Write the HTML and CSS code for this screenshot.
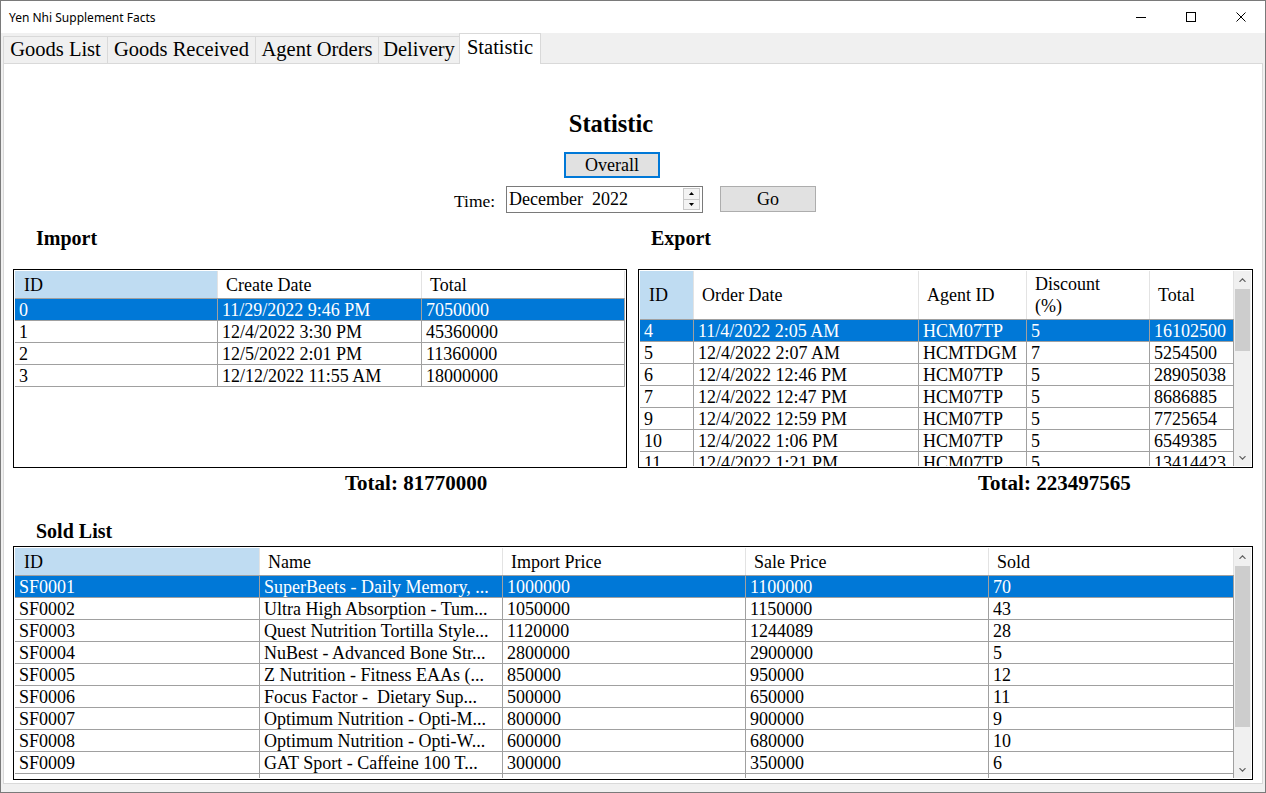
FILE: index.html
```html
<!DOCTYPE html>
<html>
<head>
<meta charset="utf-8">
<title>Yen Nhi Supplement Facts</title>
<link rel="stylesheet" href="styles.css">
</head>
<body>
<div class="window">
  <div class="titlebar">
    <span class="title">Yen Nhi Supplement Facts</span>
    <div class="controls">
      <span class="ctl"><svg width="10" height="10" viewBox="0 0 10 10"><line x1="0" y1="5.5" x2="10" y2="5.5" stroke="#000" stroke-width="1"/></svg></span>
      <span class="ctl"><svg width="10" height="10" viewBox="0 0 10 10"><rect x="0.5" y="0.5" width="9" height="9" fill="none" stroke="#000" stroke-width="1"/></svg></span>
      <span class="ctl"><svg width="10" height="10" viewBox="0 0 10 10"><path d="M0.5 0.5 L9.5 9.5 M9.5 0.5 L0.5 9.5" stroke="#000" stroke-width="1"/></svg></span>
    </div>
  </div>
  <div class="tabs">
    <div class="tab tab-goods">Goods List</div>
    <div class="tab tab-received">Goods Received</div>
    <div class="tab tab-orders">Agent Orders</div>
    <div class="tab tab-delivery">Delivery</div>
    <div class="tab tab-statistic active">Statistic</div>
  </div>
  <div class="panel">
    <div class="top">
      <h1 class="page-title">Statistic</h1>
      <button class="btn overall">Overall</button>
      <div class="time-row">
        <span class="time-label">Time:</span>
        <div class="datepicker">
          <span class="date-text">December&nbsp; 2022</span>
          <div class="spin">
            <span class="spin-btn"><svg width="5" height="3" viewBox="0 0 5 3"><path d="M2.5 0 L5 3 L0 3 Z" fill="#000"/></svg></span>
            <span class="spin-btn"><svg width="5" height="3" viewBox="0 0 5 3"><path d="M0 0 L5 0 L2.5 3 Z" fill="#000"/></svg></span>
          </div>
        </div>
        <button class="btn go">Go</button>
      </div>
    </div>

    <div class="lists">
      <section class="list import">
        <h2 class="section-title">Import</h2>
        <div class="grid grid-import">
          <div class="grid-body">
            <div class="hrow cols-import">
              <div class="hcell current">ID</div>
              <div class="hcell">Create Date</div>
              <div class="hcell">Total</div>
            </div>
            <div class="row cols-import selected"><div class="cell">0</div><div class="cell">11/29/2022 9:46 PM</div><div class="cell">7050000</div></div>
            <div class="row cols-import"><div class="cell">1</div><div class="cell">12/4/2022 3:30 PM</div><div class="cell">45360000</div></div>
            <div class="row cols-import"><div class="cell">2</div><div class="cell">12/5/2022 2:01 PM</div><div class="cell">11360000</div></div>
            <div class="row cols-import"><div class="cell">3</div><div class="cell">12/12/2022 11:55 AM</div><div class="cell">18000000</div></div>
          </div>
        </div>
        <div class="total total-import">Total: 81770000</div>
      </section>

      <section class="list export">
        <h2 class="section-title">Export</h2>
        <div class="grid grid-export">
          <div class="grid-body">
            <div class="hrow hrow-tall cols-export">
              <div class="hcell current">ID</div>
              <div class="hcell">Order Date</div>
              <div class="hcell">Agent ID</div>
              <div class="hcell">Discount<br>(%)</div>
              <div class="hcell">Total</div>
            </div>
            <div class="row cols-export selected"><div class="cell">4</div><div class="cell">11/4/2022 2:05 AM</div><div class="cell">HCM07TP</div><div class="cell">5</div><div class="cell">16102500</div></div>
            <div class="row cols-export"><div class="cell">5</div><div class="cell">12/4/2022 2:07 AM</div><div class="cell">HCMTDGM</div><div class="cell">7</div><div class="cell">5254500</div></div>
            <div class="row cols-export"><div class="cell">6</div><div class="cell">12/4/2022 12:46 PM</div><div class="cell">HCM07TP</div><div class="cell">5</div><div class="cell">28905038</div></div>
            <div class="row cols-export"><div class="cell">7</div><div class="cell">12/4/2022 12:47 PM</div><div class="cell">HCM07TP</div><div class="cell">5</div><div class="cell">8686885</div></div>
            <div class="row cols-export"><div class="cell">9</div><div class="cell">12/4/2022 12:59 PM</div><div class="cell">HCM07TP</div><div class="cell">5</div><div class="cell">7725654</div></div>
            <div class="row cols-export"><div class="cell">10</div><div class="cell">12/4/2022 1:06 PM</div><div class="cell">HCM07TP</div><div class="cell">5</div><div class="cell">6549385</div></div>
            <div class="row cols-export"><div class="cell">11</div><div class="cell">12/4/2022 1:21 PM</div><div class="cell">HCM07TP</div><div class="cell">5</div><div class="cell">13414423</div></div>
          </div>
          <div class="scrollbar">
            <span class="sb-btn"><svg width="7" height="4" viewBox="0 0 7 4"><polyline points="0.5,3.8 3.5,0.8 6.5,3.8" fill="none" stroke="#606060" stroke-width="1.2"/></svg></span>
            <div class="sb-track"><div class="thumb thumb-export"></div></div>
            <span class="sb-btn"><svg width="7" height="4" viewBox="0 0 7 4"><polyline points="0.5,0.2 3.5,3.2 6.5,0.2" fill="none" stroke="#606060" stroke-width="1.2"/></svg></span>
          </div>
        </div>
        <div class="total total-export">Total: 223497565</div>
      </section>
    </div>

    <section class="sold">
      <h2 class="section-title">Sold List</h2>
      <div class="grid grid-sold">
        <div class="grid-body">
          <div class="hrow cols-sold">
            <div class="hcell current">ID</div>
            <div class="hcell">Name</div>
            <div class="hcell">Import Price</div>
            <div class="hcell">Sale Price</div>
            <div class="hcell">Sold</div>
          </div>
          <div class="row cols-sold selected"><div class="cell">SF0001</div><div class="cell">SuperBeets - Daily Memory, ...</div><div class="cell">1000000</div><div class="cell">1100000</div><div class="cell">70</div></div>
          <div class="row cols-sold"><div class="cell">SF0002</div><div class="cell">Ultra High Absorption - Tum...</div><div class="cell">1050000</div><div class="cell">1150000</div><div class="cell">43</div></div>
          <div class="row cols-sold"><div class="cell">SF0003</div><div class="cell">Quest Nutrition Tortilla Style...</div><div class="cell">1120000</div><div class="cell">1244089</div><div class="cell">28</div></div>
          <div class="row cols-sold"><div class="cell">SF0004</div><div class="cell">NuBest - Advanced Bone Str...</div><div class="cell">2800000</div><div class="cell">2900000</div><div class="cell">5</div></div>
          <div class="row cols-sold"><div class="cell">SF0005</div><div class="cell">Z Nutrition - Fitness EAAs (...</div><div class="cell">850000</div><div class="cell">950000</div><div class="cell">12</div></div>
          <div class="row cols-sold"><div class="cell">SF0006</div><div class="cell">Focus Factor -  Dietary Sup...</div><div class="cell">500000</div><div class="cell">650000</div><div class="cell">11</div></div>
          <div class="row cols-sold"><div class="cell">SF0007</div><div class="cell">Optimum Nutrition - Opti-M...</div><div class="cell">800000</div><div class="cell">900000</div><div class="cell">9</div></div>
          <div class="row cols-sold"><div class="cell">SF0008</div><div class="cell">Optimum Nutrition - Opti-W...</div><div class="cell">600000</div><div class="cell">680000</div><div class="cell">10</div></div>
          <div class="row cols-sold"><div class="cell">SF0009</div><div class="cell">GAT Sport - Caffeine 100 T...</div><div class="cell">300000</div><div class="cell">350000</div><div class="cell">6</div></div>
          <div class="row cols-sold"><div class="cell">SF0010</div><div class="cell">Jarrow Formulas - Bone-Up...</div><div class="cell">450000</div><div class="cell">520000</div><div class="cell">8</div></div>
        </div>
        <div class="scrollbar">
          <span class="sb-btn"><svg width="7" height="4" viewBox="0 0 7 4"><polyline points="0.5,3.8 3.5,0.8 6.5,3.8" fill="none" stroke="#606060" stroke-width="1.2"/></svg></span>
          <div class="sb-track"><div class="thumb thumb-sold"></div></div>
          <span class="sb-btn"><svg width="7" height="4" viewBox="0 0 7 4"><polyline points="0.5,0.2 3.5,3.2 6.5,0.2" fill="none" stroke="#606060" stroke-width="1.2"/></svg></span>
        </div>
      </div>
    </section>
  </div>
</div>
</body>
</html>
```
FILE: styles.css
```css
* { box-sizing: border-box; margin: 0; padding: 0; }
html, body { margin: 0; background: #ffffff; }

.window {
  width: 1266px;
  height: 793px;
  border: 1px solid #7a7a7a;
  background: #f0f0f0;
  display: flex;
  flex-direction: column;
  font-family: "Liberation Serif", "Times New Roman", serif;
  color: #000;
  overflow: hidden;
}

/* Title bar */
.titlebar {
  flex: none;
  height: 32px;
  background: #ffffff;
  display: flex;
  align-items: center;
  justify-content: space-between;
}
.title {
  font-family: "Noto Sans", "Open Sans", sans-serif;
  font-size: 12px;
  padding-left: 8px;
  padding-top: 1px;
}
.controls { display: flex; height: 100%; }
.ctl {
  width: 50px;
  display: flex;
  align-items: center;
  justify-content: center;
}
.controls .ctl:last-child { width: 49px; }
.controls svg { display: block; }

/* Tabs */
.tabs {
  flex: none;
  height: 30px;
  display: flex;
  align-items: flex-end;
  padding-left: 2px;
  position: relative;
  z-index: 1;
}
.tab {
  height: 27px;
  font-size: 20.5px;
  line-height: 25px;
  text-align: center;
  background: #f0f0f0;
  border: 1px solid #d9d9d9;
  border-bottom: none;
  border-right: none;
  white-space: nowrap;
}
.tab-goods { width: 104px; }
.tab-received { width: 148px; }
.tab-orders { width: 123px; }
.tab-delivery { width: 81px; }
.tab-statistic { width: 82px; }
.tab.active {
  height: 31px;
  margin-bottom: -1px;
  background: #ffffff;
  border-right: 1px solid #d9d9d9;
  line-height: 26px;
}

/* Panel */
.panel {
  flex: none;
  height: 721px;
  margin: 0 2px;
  background: #ffffff;
  border: 1px solid #d9d9d9;
  padding: 0 8px 0 9px;
}

.top {
  width: 1214px;
  margin-left: -9px;
  display: flex;
  flex-direction: column;
  align-items: center;
}
.page-title {
  margin-top: 46px;
  height: 28px;
  font-size: 24.5px;
  font-weight: bold;
  line-height: 28px;
}
.btn {
  font-family: "Liberation Serif", "Times New Roman", serif;
  font-size: 18px;
  color: #000;
  background: #e1e1e1;
  border: 1px solid #adadad;
  line-height: 22px;
}
.overall {
  margin-top: 14px;
  width: 96px;
  height: 26px;
  border: 2px solid #0078d7;
  margin-left: 2px;
}
.time-row {
  margin-top: 8px;
  height: 26px;
  align-self: flex-start;
  margin-left: 450px;
  display: flex;
  align-items: center;
}
.time-label {
  font-size: 17.5px;
  width: 52px;
  padding-top: 4px;
}
.datepicker {
  width: 197px;
  height: 27px;
  border: 1px solid #7a7a7a;
  display: flex;
  align-items: center;
  justify-content: space-between;
  padding-left: 2px;
  padding-right: 1px;
}
.date-text {
  font-size: 18px;
  line-height: 22px;
}
.spin {
  width: 17px;
  height: 22px;
  display: flex;
  flex-direction: column;
  margin-right: 1px;
}
.spin-btn {
  flex: 1;
  display: flex;
  align-items: center;
  justify-content: center;
  background: #f3f3f3;
  border: 1px solid #c8c8c8;
}
.spin-btn + .spin-btn { border-top: none; }
.spin svg { display: block; }
.go {
  margin-left: 17px;
  width: 96px;
  height: 26px;
}

/* Lists */
.lists {
  margin-top: 14px;
  display: flex;
  gap: 11px;
}
.section-title {
  height: 24px;
  font-size: 20px;
  font-weight: bold;
  line-height: 24px;
  padding-left: 23px;
}
.export .section-title { padding-left: 13px; }
.list .section-title { margin-bottom: 19px; }
.grid {
  border: 1px solid #000;
  padding: 1px;
  background: #ffffff;
  display: flex;
  overflow: hidden;
}
.grid-import { width: 614px; height: 199px; }
.grid-export { width: 615px; height: 199px; }
.grid-sold { width: 1240px; height: 234px; }
.grid-body { flex: 1; overflow: hidden; }

.hrow {
  display: grid;
  height: 28px;
  border-bottom: 1px solid #a0a0a0;
}
.hrow-tall { height: 49px; }
.hcell {
  display: flex;
  align-items: center;
  padding-left: 8px;
  font-size: 18px;
  line-height: 22px;
  border-right: 1px solid #e3e3e3;
  white-space: nowrap;
  padding-top: 1px;
}
.hrow-tall .hcell { padding-top: 0; }
.hcell.current { background: #bfdcf2; padding-left: 9px; }

.row {
  display: grid;
  height: 22px;
}
.cell {
  border-right: 1px solid #a0a0a0;
  border-bottom: 1px solid #a0a0a0;
  padding-left: 4px;
  padding-top: 1px;
  font-size: 18px;
  line-height: 21px;
  white-space: pre;
  overflow: hidden;
}
.row.selected { background: #0078d7; color: #ffffff; }

.cols-import { grid-template-columns: 203px 204px 203px; }
.cols-export { grid-template-columns: 54px 225px 108px 123px 84px; }
.cols-sold { grid-template-columns: 245px 243px 243px 243px 245px; }

.scrollbar {
  width: 17px;
  flex: none;
  background: #f0f0f0;
  display: flex;
  flex-direction: column;
}
.sb-btn {
  height: 17px;
  flex: none;
  display: flex;
  align-items: center;
  justify-content: center;
}
.sb-btn svg { display: block; }
.sb-track { flex: 1; padding: 1px 1px 0 1px; }
.thumb { background: #cdcdcd; width: 15px; }
.thumb-export { height: 62px; }
.thumb-sold { height: 161px; }

.total {
  margin-top: 3px;
  height: 24px;
  font-size: 21px;
  font-weight: bold;
  line-height: 24px;
}
.total-import { padding-left: 332px; }
.total-export { padding-left: 340px; }

.sold { margin-top: 24px; }
.sold .section-title { margin-bottom: 3px; }
```
